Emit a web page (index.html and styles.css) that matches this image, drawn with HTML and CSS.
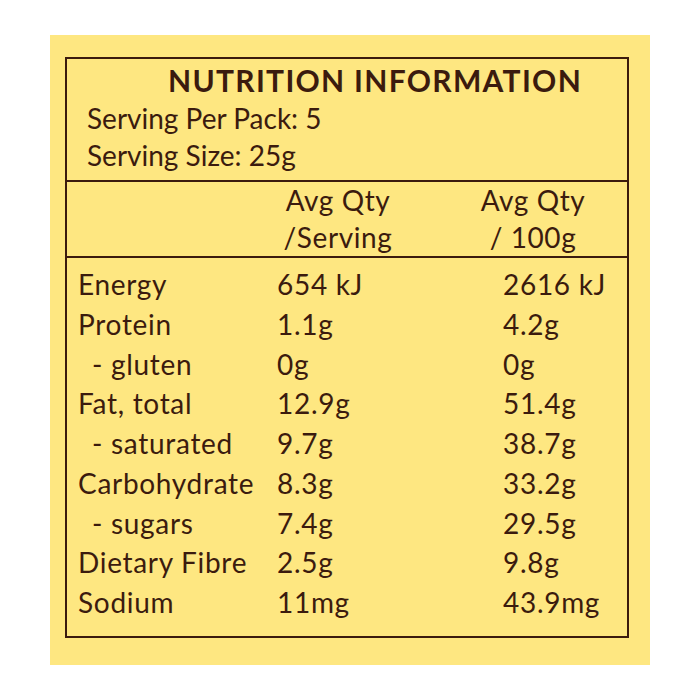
FILE: index.html
```html
<!DOCTYPE html>
<html lang="en">
<head>
<meta charset="utf-8">
<title>Nutrition Information</title>
<link rel="stylesheet" href="styles.css">
</head>
<body>
<div class="panel">
  <div class="label">
    <div class="top">
      <h1 class="title">NUTRITION INFORMATION</h1>
      <p class="serving serving-first">Serving Per Pack: 5</p>
      <p class="serving">Serving Size: 25g</p>
    </div>
    <div class="head">
      <div class="hcell hcell-1">Avg Qty<br>/Serving</div>
      <div class="hcell hcell-2">Avg Qty<br>/ 100g</div>
    </div>
    <div class="rows">
      <div class="name">Energy</div><div class="v1">654 kJ</div><div class="v2">2616 kJ</div>
      <div class="name">Protein</div><div class="v1">1.1g</div><div class="v2">4.2g</div>
      <div class="name sub">- gluten</div><div class="v1">0g</div><div class="v2">0g</div>
      <div class="name">Fat, total</div><div class="v1">12.9g</div><div class="v2">51.4g</div>
      <div class="name sub">- saturated</div><div class="v1">9.7g</div><div class="v2">38.7g</div>
      <div class="name">Carbohydrate</div><div class="v1">8.3g</div><div class="v2">33.2g</div>
      <div class="name sub">- sugars</div><div class="v1">7.4g</div><div class="v2">29.5g</div>
      <div class="name">Dietary Fibre</div><div class="v1">2.5g</div><div class="v2">9.8g</div>
      <div class="name">Sodium</div><div class="v1">11mg</div><div class="v2">43.9mg</div>
    </div>
  </div>
</div>
</body>
</html>
```
FILE: styles.css
```css
* { box-sizing: border-box; }
html, body { margin: 0; padding: 0; background: #ffffff; }
body {
  font-family: Lato, "Open Sans", sans-serif;
  color: #3b1b0e;
}
.panel {
  margin: 35px 0 0 50px;
  width: 600px;
  height: 630px;
  background: #fee781;
  padding: 22px 21px 0 15px;
}
.label {
  border: 2.5px solid #3b1b0e;
  width: 564px;
}
.top {
  padding: 4px 0 6px 0;
  border-bottom: 2px solid #3b1b0e;
}
.title {
  margin: 0;
  padding-left: 101px;
  font-size: 30px;
  line-height: 34px;
  font-weight: 700;
  letter-spacing: 1.3px;
}
.serving {
  margin: 0;
  padding-left: 20px;
  font-size: 28px;
  line-height: 37px;
}
.serving-first { margin-top: 3px; }
.head {
  display: flex;
  padding-left: 208px;
  border-bottom: 2px solid #3b1b0e;
  font-size: 28px;
  line-height: 37px;
  letter-spacing: 0.6px;
}
.hcell {
  width: 126px;
  text-align: center;
  white-space: nowrap;
}
.hcell-2 { margin-left: 69px; }
.rows {
  display: grid;
  grid-template-columns: 199px 226px 1fr;
  padding: 7px 0 13px 11px;
  font-size: 28px;
  line-height: 39.75px;
  letter-spacing: 0.7px;
}
.name { white-space: nowrap; }
.sub { padding-left: 14px; }
```
